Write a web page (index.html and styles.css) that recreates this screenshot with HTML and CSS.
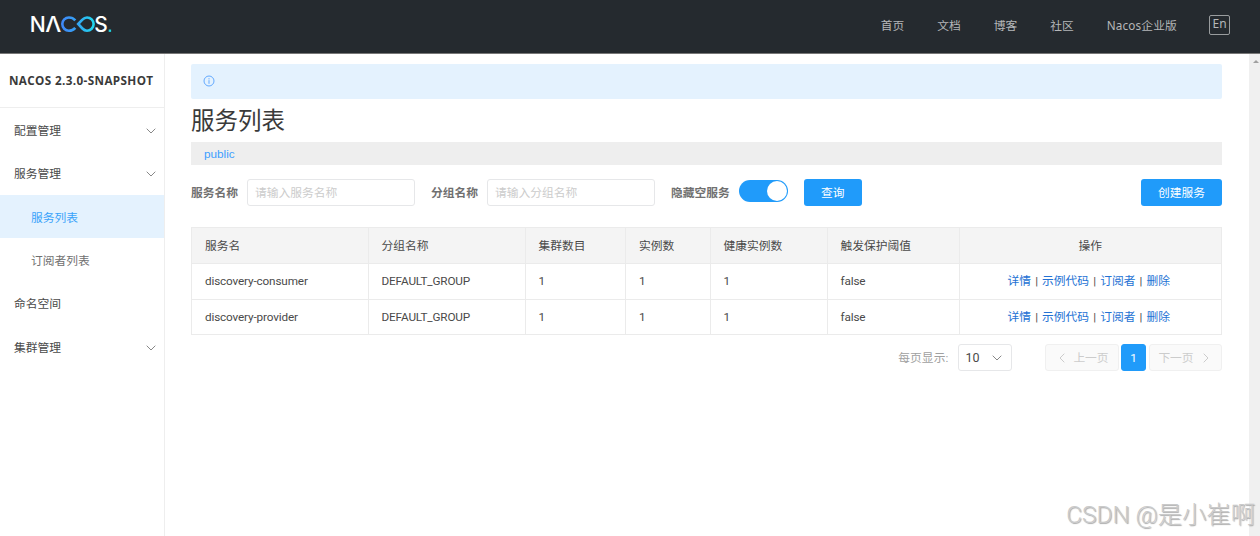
FILE: index.html
```html
<!DOCTYPE html>
<html lang="zh-CN">
<head>
<meta charset="utf-8">
<title>Nacos</title>
<link rel="stylesheet" href="styles.css">
</head>
<body>
<header class="header">
  <svg class="logo" width="84" height="32" viewBox="0 -6 84 32" aria-label="NACOS">
    <defs>
      <linearGradient id="loop" gradientUnits="userSpaceOnUse" x1="31" y1="0" x2="64" y2="0">
        <stop offset="0" stop-color="#3f86f8"/><stop offset=".5" stop-color="#35a5f4"/><stop offset="1" stop-color="#1fd8ee"/>
      </linearGradient>
    </defs>
    <g class="logo-text">
      <text x="-.3" y="17.700" textLength="16" lengthAdjust="spacingAndGlyphs">N</text>
      <text x="15.300" y="17.700" textLength="16" lengthAdjust="spacingAndGlyphs">Λ</text>
      <text x="64.200" y="17.700" textLength="13.500" lengthAdjust="spacingAndGlyphs">S</text>
    </g>
    <path d="M45.300 6.400C43.500 4.300 41.100 3.500 38.900 3.500a6.600 6.600 0 0 0 0 13.200c2.200 0 4.600-.8 6.400-2.900M48.200 10l4.200-4.300C53.800 4.200 55.200 3.500 57 3.500a6.600 6.600 0 0 1 0 13.200c-1.800 0-3.200-.7-4.600-2.200z" fill="none" stroke="url(#loop)" stroke-width="2.600"/>
    <rect x="78.700" y="15.500" width="2.400" height="2.400" fill="#1fd0dc"/>
  </svg>
  <nav class="nav">
    <a>首页</a><a>文档</a><a>博客</a><a>社区</a><a>Nacos企业版</a><span class="lang">En</span>
  </nav>
</header>
<div class="body">
  <aside class="sidebar">
    <h1 class="version">NACOS 2.3.0-SNAPSHOT</h1>
    <ul class="menu">
      <li>配置管理<svg class="chev" viewBox="0 0 10 6"><path d="M.7.7 5 5 9.300.7"/></svg></li>
      <li>服务管理<svg class="chev" viewBox="0 0 10 6"><path d="M.7.7 5 5 9.300.7"/></svg></li>
      <li class="sub active">服务列表</li>
      <li class="sub">订阅者列表</li>
      <li>命名空间</li>
      <li>集群管理<svg class="chev" viewBox="0 0 10 6"><path d="M.7.7 5 5 9.300.7"/></svg></li>
    </ul>
  </aside>
  <main class="main">
    <div class="notice"><svg width="12" height="12" viewBox="0 0 12 12"><circle cx="6" cy="6" r="5" fill="none" stroke="#62a9ff"/><path d="M6 3.200v1.200M6 5.200v3.600" stroke="#62a9ff"/></svg></div>
    <h2 class="title">服务列表</h2>
    <div class="namespace">public</div>
    <form class="filters">
      <label>服务名称</label><input class="field" placeholder="请输入服务名称">
      <label class="gap">分组名称</label><input class="field" placeholder="请输入分组名称">
      <label class="gap">隐藏空服务</label><span class="switch"></span>
      <button type="button" class="btn query">查询</button>
      <button type="button" class="btn create">创建服务</button>
    </form>
    <table class="table">
      <colgroup><col class="c1"><col class="c2"><col class="c3"><col class="c4"><col class="c5"><col class="c6"><col></colgroup>
      <thead><tr><th>服务名</th><th>分组名称</th><th>集群数目</th><th>实例数</th><th>健康实例数</th><th>触发保护阈值</th><th class="ops">操作</th></tr></thead>
      <tbody>
        <tr><td>discovery-consumer</td><td>DEFAULT_GROUP</td><td>1</td><td>1</td><td>1</td><td>false</td><td class="ops"><a>详情</a><i>|</i><a>示例代码</a><i>|</i><a>订阅者</a><i>|</i><a>删除</a></td></tr>
        <tr><td>discovery-provider</td><td>DEFAULT_GROUP</td><td>1</td><td>1</td><td>1</td><td>false</td><td class="ops"><a>详情</a><i>|</i><a>示例代码</a><i>|</i><a>订阅者</a><i>|</i><a>删除</a></td></tr>
      </tbody>
    </table>
    <div class="pager">
      <span class="per">每页显示:</span>
      <span class="select">10<svg class="chev" viewBox="0 0 10 6"><path d="M.7.7 5 5 9.300.7"/></svg></span>
      <span class="page prev"><svg width="6" height="10" viewBox="0 0 6 10"><path d="M5.300.7 1 5l4.300 4.300"/></svg>上一页</span>
      <span class="page current">1</span>
      <span class="page next">下一页<svg width="6" height="10" viewBox="0 0 6 10"><path d="M.7.7 5 5 .7 9.300"/></svg></span>
    </div>
  </main>
  <div class="scrollbar"><span class="arrow"></span></div>
</div>
<div class="watermark">CSDN @是小崔啊</div>
</body>
</html>
```
FILE: styles.css
```css
* { box-sizing: border-box; }
body { margin: 0; height: 536px; overflow: hidden; display: flex; flex-direction: column; background: #fff; color: #4a4a4a; font: 11.75px/18px Roboto, "Noto Sans CJK SC", sans-serif; }
.header { height: 54px; flex: none; display: flex; justify-content: space-between; background: #252a2f; border-bottom: 1px solid #777; padding: 0 30px; }
.logo { margin-top: 8px; }
.logo-text { font: 500 21px Inter, sans-serif; fill: #fff; }
.nav { display: flex; align-items: center; height: 50px; color: #b5b7b9; font-family: "Noto Sans", "Noto Sans CJK SC", sans-serif; }
.nav a { margin-right: 33px; }
.nav a:nth-child(5) { margin-right: 32px; letter-spacing: .15px; }
.lang { width: 21px; height: 20px; border: 1px solid #999c9e; border-radius: 2px; line-height: 16px; text-align: center; font-size: 12px; }
.body { flex: 1; display: flex; min-height: 0; }
.sidebar { width: 165px; flex: none; border-right: 1px solid #eee; }
.version { margin: 0; height: 54px; padding-left: 9px; border-bottom: 1px solid #eee; font: bold 11.700px/53px "Open Sans", sans-serif; letter-spacing: .37px; color: #3a3a3a; white-space: nowrap; }
.menu { list-style: none; margin: 0; padding: 0; padding-top: .5px; }
.menu li { height: 43.300px; padding: 2px 8px 0 14px; display: flex; align-items: center; justify-content: space-between; color: #4a4a4a; }
.menu .sub { padding-left: 31px; color: #707070; }
.menu .active { background: #e4f2fe; color: #3aa3fa; }
.chev { width: 10px; height: 6px; fill: none; stroke: #888; }
.main { flex: 1; padding: 10px 27px 0 26px; min-width: 0; }
.notice { height: 35px; background: #e4f2fe; border-radius: 2px; padding: 0 12px 1px; display: flex; align-items: center; }
.title { margin: 6px 0 5px; font-size: 23.500px; line-height: 32px; font-weight: 400; color: #3a3a3a; }
.namespace { height: 23px; line-height: 23px; background: #eee; padding-left: 13px; color: #409eff; font-family: "Liberation Sans", sans-serif; }
.filters { display: flex; align-items: center; height: 27px; margin-top: 14px; }
.filters label { font-weight: 700; color: #707070; margin-right: 9px; }
.filters .gap { margin-left: 16px; }
.field { width: 168px; height: 27px; border: 1px solid #e6e7e9; border-radius: 3px; padding: 0 7px; font: inherit; }
.field::placeholder { color: #ccc; opacity: 1; }
.switch { width: 49px; height: 22px; margin: -4px 16px 0 0; border-radius: 11px; background: #209bfa; padding: 1px; display: flex; justify-content: flex-end; }
.switch::after { content: ""; width: 20px; height: 20px; border-radius: 50%; background: #fff; }
.btn { height: 27px; border: 0; border-radius: 3px; background: #209bfa; color: #fff; font: inherit; padding: 0; }
.query { width: 58px; }
.create { width: 81px; margin-left: auto; }
.table { width: 100%; margin-top: 21px; border-collapse: collapse; table-layout: fixed; }
.table th, .table td { height: 35.800px; border: 1px solid #ebebeb; padding: 0 13px; text-align: left; font-weight: 400; }
.table th { background: #f4f4f4; padding-top: 1px; }
.table td { letter-spacing: -.15px; }
.table .ops { text-align: center; letter-spacing: 0; }
.table td.ops { padding-right: 16px; }
.c1 { width: 176.500px; } .c2 { width: 157px; } .c3 { width: 100.500px; } .c4 { width: 84.500px; } .c5 { width: 117px; } .c6 { width: 132px; }
.ops a { color: #2472d4; }
.ops i { font-style: normal; margin: 0 4.100px; }
.pager { display: flex; align-items: center; justify-content: flex-end; margin-top: 9px; height: 27px; }
.per { color: #a0a0a0; margin-right: 9px; letter-spacing: .1px; }
.select { width: 54px; height: 27px; border: 1px solid #e6e7e9; border-radius: 3px; display: flex; align-items: center; justify-content: space-between; padding: 0 9px 0 7px; margin-right: 33px; font-size: 12.500px; }
.page { height: 27px; display: flex; align-items: center; justify-content: center; border: 1px solid #f0f0f0; border-radius: 3px; background: #fafafa; color: #ccc; }
.page svg { fill: none; stroke: #ccc; }
.prev { width: 74px; gap: 8px; padding-left: 5px; }
.current { width: 25px; margin: 0 3px 0 2.500px; background: #209bfa; border-color: #209bfa; color: #fff; }
.next { width: 73px; gap: 9px; padding-right: 4px; }
.scrollbar { width: 11px; flex: none; background: #f0f0f0; padding: 6px 0 0 4px; }
.arrow { display: block; width: 6px; border: 3px solid transparent; border-top: 0; border-bottom: 3px solid #a0a0a0; }
.watermark { position: absolute; right: 5px; bottom: 3px; font: 300 24.300px/36px Roboto, "Noto Sans CJK SC", sans-serif; color: #cacaca; text-shadow: 1px 1px 1px #aaa; white-space: nowrap; }
```
